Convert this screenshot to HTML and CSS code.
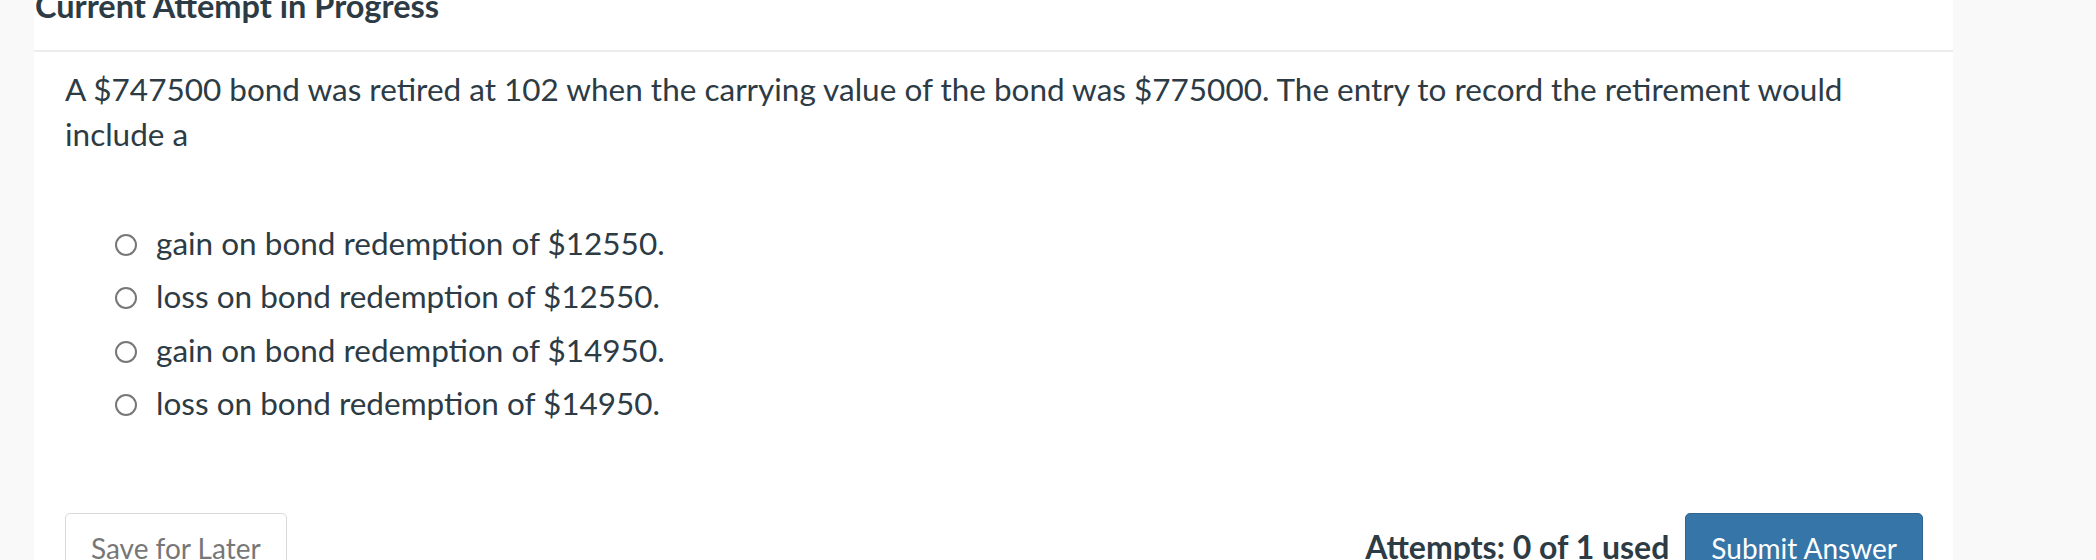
FILE: index.html
```html
<!DOCTYPE html>
<html lang="en">
<head>
    <meta charset="UTF-8">
    <title>Current Attempt in Progress</title>
    <link rel="stylesheet" href="styles.css">
</head>
<body>

<div class="layout">
    <div class="panel">
        <h2 class="attempt-title">Current Attempt in Progress</h2>
        <div class="divider"></div>

        <div class="question">
            <p class="question-text">A $747500 bond was retired at 102 when the carrying value of the bond was $775000. The entry to record the retirement would include a</p>

            <ul class="answers">
                <li class="answer"><span class="radio"></span>gain on bond redemption of $12550.</li>
                <li class="answer"><span class="radio"></span>loss on bond redemption of $12550.</li>
                <li class="answer"><span class="radio"></span>gain on bond redemption of $14950.</li>
                <li class="answer"><span class="radio"></span>loss on bond redemption of $14950.</li>
            </ul>
        </div>

        <div class="footer">
            <button class="btn btn-save">Save for Later</button>
            <span class="attempts">Attempts: 0 of 1 used</span>
            <button class="btn btn-submit">Submit Answer</button>
        </div>
    </div>
</div>

</body>
</html>
```

FILE: styles.css
```css
body {
    margin: 0;
    font-family: Lato, "Open Sans", sans-serif;
    color: #2d3b45;
    background-color: #f9f9f9;
    overflow: hidden;
}
.layout {
    padding-left: 34px;
}
.panel {
    width: 1919px;
    min-height: 600px;
    background-color: white;
}
.attempt-title {
    margin: -14px 0 0 1px;
    font-size: 32.5px;
    line-height: 40px;
    font-weight: bold;
}
.divider {
    margin-top: 24px;
    height: 2px;
    background-color: #ececec;
}
.question {
    padding: 15px 31px 0;
}
.question-text {
    margin: 0;
    font-size: 31.5px;
    line-height: 45px;
}
.answers {
    list-style: none;
    margin: 59px 0 0;
    padding: 0 0 0 50px;
}
.answer {
    display: flex;
    align-items: center;
    height: 53.5px;
    font-size: 31.5px;
}
.radio {
    width: 18px;
    height: 18px;
    margin: 4px 19px 0 0;
    border: 2px solid #777;
    border-radius: 50%;
    flex-shrink: 0;
}
.footer {
    display: flex;
    align-items: baseline;
    margin-top: 83px;
    padding: 0 30px 0 31px;
}
.btn {
    font-family: Lato, "Open Sans", sans-serif;
    font-size: 28px;
    line-height: 42px;
    padding: 13px 25px 20px;
    border-radius: 5px;
    cursor: pointer;
}
.btn-save {
    background-color: white;
    color: #777;
    border: 1px solid #d9d9d9;
}
.attempts {
    margin-left: auto;
    margin-right: 16px;
    font-size: 32px;
    font-weight: bold;
}
.btn-submit {
    background-color: #3575a8;
    color: white;
    border: 1px solid #2d6593;
}
```
